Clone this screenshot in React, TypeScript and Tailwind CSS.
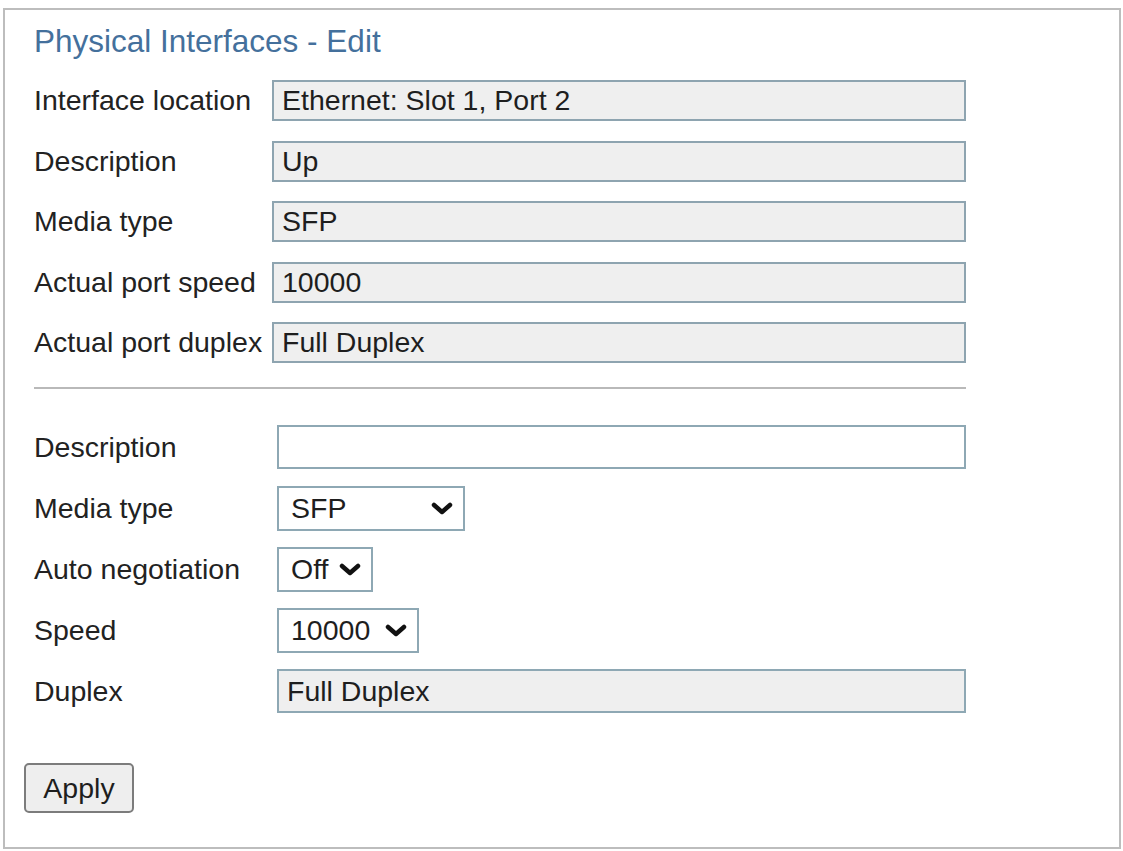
import React from "react";

const font = { fontFamily: '"Liberation Sans", Arial, sans-serif' };

function Chevron() {
  return (
    <svg width="22" height="13" viewBox="0 0 22 13" className="shrink-0">
      <polyline points="3,3 11,10 19,3" fill="none" stroke="#111" strokeWidth="4.5" strokeLinecap="round" strokeLinejoin="round" />
    </svg>
  );
}

function ReadRow({ label, value }: { label: string; value: string }) {
  return (
    <div className="flex items-center h-[41px]">
      <div className="w-[238px] shrink-0 text-[28.5px] text-[#222] whitespace-nowrap leading-none">{label}</div>
      <div className="w-[694px] h-[41px] border-2 border-[#8ea4b0] bg-[#efefef] flex items-center pl-[8px] text-[28.5px] text-[#1e1e1e] leading-none whitespace-nowrap">
        {value}
      </div>
    </div>
  );
}

function EditRow({ label, children }: { label: string; children: React.ReactNode }) {
  return (
    <div className="flex items-center h-[44px]">
      <div className="w-[243px] shrink-0 text-[28.5px] text-[#222] whitespace-nowrap leading-none">{label}</div>
      {children}
    </div>
  );
}

function Select({ value, width }: { value: string; width: string }) {
  return (
    <div className={`${width} h-[45px] border-2 border-[#8ea8b4] bg-white flex items-center justify-between pl-[12px] pr-[10px] text-[28.5px] text-[#1e1e1e] leading-none whitespace-nowrap`}>
      <span>{value}</span>
      <Chevron />
    </div>
  );
}

export default function App() {
  return (
    <div className="w-[1123px] h-[851px] bg-white pt-[8px] pl-[3px]" style={font}>
      <div className="w-[1118px] h-[841px] border-2 border-[#bdbdbd] pl-[19px] flex flex-col">
        <div className="pl-[10px] mt-[13px] h-[36px] leading-[36px] text-[31.5px] text-[#44709c] whitespace-nowrap">
          Physical Interfaces - Edit
        </div>
        <div className="pl-[10px] mt-[21px] flex flex-col gap-[19.5px]">
          <ReadRow label="Interface location" value="Ethernet: Slot 1, Port 2" />
          <ReadRow label="Description" value="Up" />
          <ReadRow label="Media type" value="SFP" />
          <ReadRow label="Actual port speed" value="10000" />
          <ReadRow label="Actual port duplex" value="Full Duplex" />
        </div>
        <div className="ml-[10px] mt-[24px] w-[932px] h-[2px] bg-[#b9b9b9]" />
        <div className="pl-[10px] mt-[36px] flex flex-col gap-[17px]">
          <EditRow label="Description">
            <div className="w-[689px] h-[44px] border-2 border-[#8ea8b4] bg-white" />
          </EditRow>
          <EditRow label="Media type">
            <Select value="SFP" width="w-[188px]" />
          </EditRow>
          <EditRow label="Auto negotiation">
            <Select value="Off" width="w-[96px]" />
          </EditRow>
          <EditRow label="Speed">
            <Select value="10000" width="w-[142px]" />
          </EditRow>
          <EditRow label="Duplex">
            <div className="w-[689px] h-[44px] border-2 border-[#8ea8b4] bg-[#efefef] flex items-center pl-[8px] text-[28.5px] text-[#1e1e1e] leading-none whitespace-nowrap">
              Full Duplex
            </div>
          </EditRow>
        </div>
        <div className="mt-[50px]">
          <button className="w-[110px] h-[50px] border-2 border-[#7c7c7c] rounded-[5px] bg-[#eeeeee] text-[28.5px] text-[#1e1e1e] leading-none flex items-center justify-center" style={font}>
            Apply
          </button>
        </div>
      </div>
    </div>
  );
}
